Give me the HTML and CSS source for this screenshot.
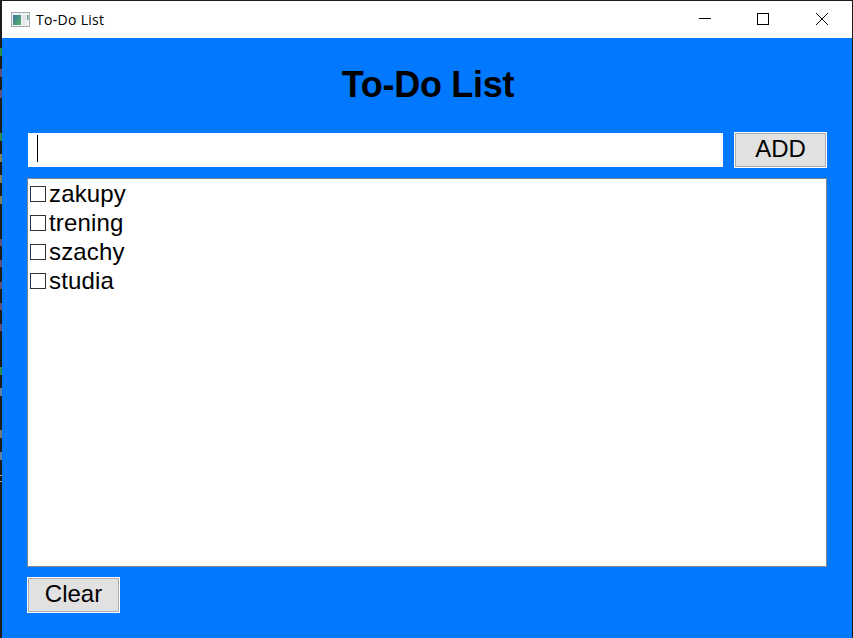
FILE: index.html
```html
<!DOCTYPE html>
<html lang="en">
<head>
<meta charset="utf-8">
<title>To-Do List</title>
<link rel="stylesheet" href="styles.css">
</head>
<body>
<div class="window">
  <header class="titlebar">
    <svg class="app-icon" width="20" height="16" viewBox="0 0 20 16">
      <defs><linearGradient id="g" x1="0" y1="0" x2="1" y2="1"><stop offset="0" stop-color="#3d74a0"/><stop offset="1" stop-color="#55b568"/></linearGradient></defs>
      <rect x=".5" y=".5" width="18" height="14" fill="#f1f1f2" stroke="#a5abb2"/>
      <rect x="2" y="3" width="8" height="10" fill="url(#g)"/>
      <rect x="11" y="3" width="4" height="10" fill="#e4e7ea"/>
      <rect x="16" y="3" width="1.5" height="5" fill="#6c9b98"/>
    </svg>
    <span class="caption">To-Do List</span>
    <svg class="controls" width="174" height="37" viewBox="0 0 174 37" fill="none" stroke="#000" shape-rendering="crispEdges">
      <path d="M21 17.5h12M79.500 12.500h11v11h-11z"/>
      <path d="M138 12l12 12M150 12l-12 12" shape-rendering="auto"/>
    </svg>
  </header>
  <main class="content">
    <h1 class="heading">To-Do List</h1>
    <div class="entry">
      <div class="field"><span class="caret"></span></div>
      <button class="button">ADD</button>
    </div>
    <ul class="list">
      <li class="item"><span class="box"></span>zakupy</li>
      <li class="item"><span class="box"></span>trening</li>
      <li class="item"><span class="box"></span>szachy</li>
      <li class="item"><span class="box"></span>studia</li>
    </ul>
    <button class="button">Clear</button>
  </main>
</div>
</body>
</html>
```
FILE: styles.css
```css
* { box-sizing: border-box; }
html, body { margin: 0; height: 638px; overflow: hidden; }
body {
  padding: 1px 1px 0 2px;
  background:
    linear-gradient(#2f8a50, #2f8a50) 0 48px / 2px 8px no-repeat,
    linear-gradient(#62507a, #62507a) 0 69px / 2px 8px no-repeat,
    linear-gradient(#62507a, #62507a) 0 90px / 2px 8px no-repeat,
    linear-gradient(#2f8a50, #2f8a50) 0 133px / 2px 8px no-repeat,
    repeating-linear-gradient(#7c8060 0 8px, #1e1b1c 8px 21px) 0 154px / 2px 51px no-repeat,
    repeating-linear-gradient(#62507a 0 7px, #1e1b1c 7px 21.300px) 0 239px / 2px 93px no-repeat,
    linear-gradient(#2f8a50, #2f8a50) 0 367px / 2px 8px no-repeat,
    linear-gradient(#64829a, #64829a) 0 388px / 2px 8px no-repeat,
    linear-gradient(#74797c, #74797c) 0 430px / 2px 8px no-repeat,
    linear-gradient(#64829a, #64829a) 0 452px / 2px 8px no-repeat,
    linear-gradient(#aaa, #aaa) 0 475px / 2px 1px no-repeat,
    linear-gradient(#aaa, #aaa) 0 481px / 2px 1px no-repeat,
    #1e1b1c;
}
.window { display: flex; flex-direction: column; width: 850px; height: 637px; background: #0078ff; }
.titlebar { display: flex; align-items: center; height: 37px; padding-left: 9px; background: #fff; }
.app-icon { margin-right: 5px; }
.caption { font: 14px/20px "Open Sans", "Noto Sans", sans-serif; letter-spacing: .3px; color: #000; }
.controls { margin-left: auto; }
.content {
  display: flex;
  flex-direction: column;
  height: 600px;
  padding: 26px 25px 25px;
  font: 24px/29px "Liberation Sans", Arial, sans-serif;
  color: #000;
}
.heading { margin: 0 0 27px; padding-left: 2px; font-size: 36px; line-height: 41px; letter-spacing: -.3px; text-align: center; }
.entry { display: flex; justify-content: space-between; align-items: center; height: 36px; margin-bottom: 10px; }
.field { width: 695px; height: 34px; margin-left: 1px; padding: 2px 9px; background: #fff; }
.caret { display: block; width: 1px; height: 27px; background: #000; }
.button {
  width: 93px;
  height: 36px;
  padding: 0 0 3px;
  border: 1px solid #fff;
  border-radius: 0;
  background: #e1e1e1;
  box-shadow: inset 0 0 0 1px #adadad;
  font: inherit;
  color: #000;
}
.list { height: 389px; margin: 0 0 10px; padding: 0 2px; border: 1px solid #828790; background: #fff; list-style: none; }
.item { display: flex; align-items: center; height: 29px; letter-spacing: .15px; }
.box { width: 16px; height: 16px; margin-right: 3px; border: 1px solid #333; }
```
